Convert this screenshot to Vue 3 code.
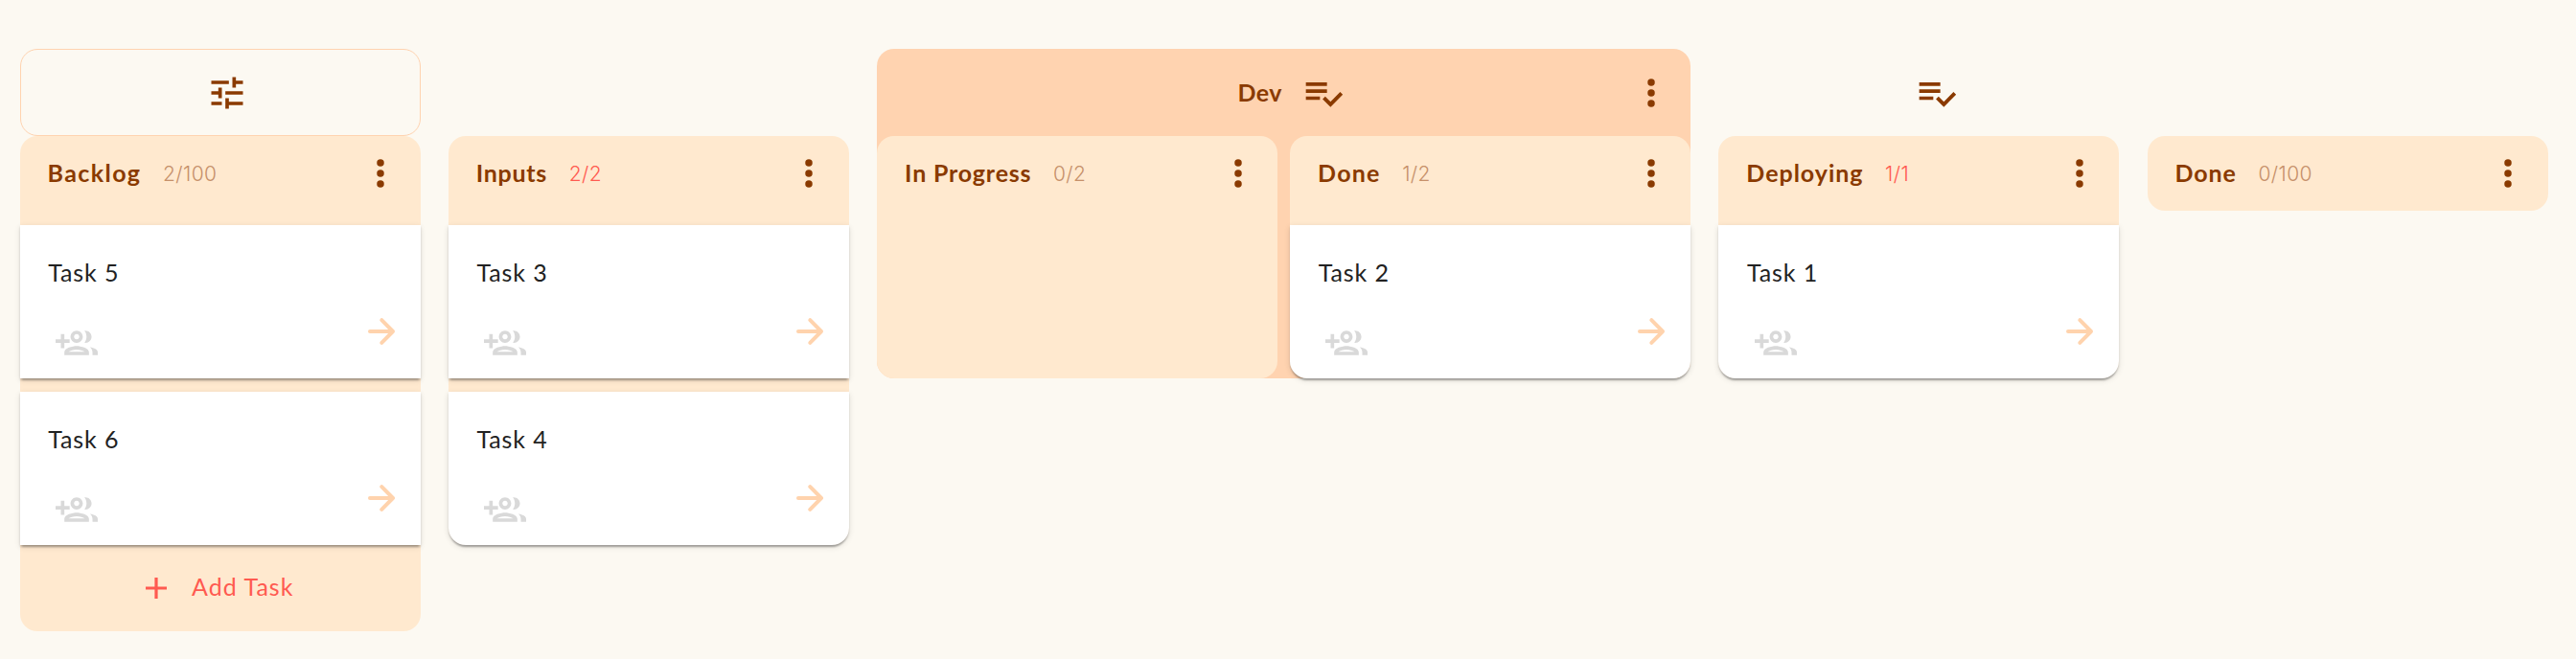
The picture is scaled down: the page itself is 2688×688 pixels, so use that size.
<script setup>
const groups = [
  {
    type: 'settings',
    columns: [{ name: 'Backlog', count: '2/100', track: 1.4, tasks: ['Task 5', 'Task 6'], add: true }],
  },
  {
    type: 'empty',
    columns: [{ name: 'Inputs', count: '2/2', track: 0.72, full: true, tasks: ['Task 3', 'Task 4'] }],
  },
  {
    type: 'stage',
    name: 'Dev',
    columns: [
      { name: 'In Progress', count: '0/2', track: 0.81, tasks: [] },
      { name: 'Done', count: '1/2', track: 1.2, tasks: ['Task 2'] },
    ],
  },
  {
    type: 'rules',
    columns: [{ name: 'Deploying', count: '1/1', track: 0.97, full: true, tasks: ['Task 1'] }],
  },
  {
    type: 'empty',
    columns: [{ name: 'Done', count: '0/100', track: 0.9, tasks: [] }],
  },
]
</script>

<template>
  <main class="board">
    <section v-for="(group, g) in groups" :key="g" class="group" :class="group.type">
      <header class="group-head">
        <svg v-if="group.type === 'settings'" class="icon tune" viewBox="0 0 24 24">
          <path d="M3 17v2h6v-2H3zM3 5v2h10V5H3zm10 16v-2h8v-2h-8v-2h-2v6h2zM7 9v2H3v2h4v2h2V9H7zm14 4v-2H11v2h10zm-6-4h2V7h4V5h-4V3h-2v6z" />
        </svg>
        <span v-if="group.name" class="group-name">{{ group.name }}</span>
        <svg v-if="group.type === 'stage' || group.type === 'rules'" class="icon check" viewBox="0 0 24 24">
          <path d="M14 10H2v2h12v-2zm0-4H2v2h12V6zM2 16h8v-2H2v2zm19.5-4.5L23 13l-6.99 7-4.51-4.5L13 14l3.01 3 5.49-5.5z" />
        </svg>
        <svg v-if="group.type === 'stage'" class="icon more" viewBox="0 0 24 24">
          <circle cx="12" cy="6" r="2.05" /><circle cx="12" cy="12" r="2.05" /><circle cx="12" cy="18" r="2.05" />
        </svg>
      </header>

      <div class="columns">
        <article v-for="col in group.columns" :key="col.name" class="column">
          <header class="column-head">
            <h2 class="title" :style="{ letterSpacing: col.track + 'px' }">{{ col.name }}</h2>
            <span class="count" :class="{ full: col.full }">{{ col.count }}</span>
            <svg class="icon more" viewBox="0 0 24 24">
              <circle cx="12" cy="6" r="2.05" /><circle cx="12" cy="12" r="2.05" /><circle cx="12" cy="18" r="2.05" />
            </svg>
          </header>

          <div v-if="col.tasks.length" class="cards">
            <div v-for="task in col.tasks" :key="task" class="card" :class="{ closed: !col.add }">
              <p class="task">{{ task }}</p>
              <div class="actions">
                <svg class="assign" viewBox="0 0 24 24">
                  <path d="M8 10H5V7H3v3H0v2h3v3h2v-3h3z" />
                  <path d="M12 13.75c-2.34 0-7 1.17-7 3.5V19h14v-1.75c0-2.33-4.66-3.5-7-3.5zM7.34 17c.84-.58 2.87-1.25 4.66-1.25s3.82.67 4.66 1.25H7.34zM12 12c1.93 0 3.5-1.57 3.5-3.5S13.93 5 12 5 8.5 6.57 8.5 8.5 10.07 12 12 12zm0-5c.83 0 1.5.67 1.5 1.5S12.83 10 12 10s-1.5-.67-1.5-1.5S11.17 7 12 7z" />
                  <path d="M16.4 5.08c.75.93 1.2 2.1 1.2 3.42s-.45 2.5-1.2 3.42c.25.05.4.08.6.08 1.93 0 3.5-1.57 3.5-3.5S18.93 5 17 5c-.2 0-.4.03-.6.08z" />
                  <path d="M19.54 14.4c.85.72 1.46 1.65 1.46 2.85V19h3v-1.75c0-1.5-1.95-2.45-4.46-2.85z" />
                </svg>
                <svg class="forward" viewBox="0 0 30 30">
                  <path d="M3 15h24M15.3 3.1 27 15 15.3 26.9" />
                </svg>
              </div>
            </div>
          </div>

          <button v-if="col.add" class="add" type="button">
            <svg class="plus" viewBox="0 0 22 22"><path d="M11 0v22M0 11h22" /></svg>
            <span class="add-label">Add Task</span>
          </button>
        </article>
      </div>
    </section>
  </main>
</template>

<style>
html,
body {
  background: #fcf9f2;
}
</style>

<style scoped>
.board {
  box-sizing: border-box;
  width: 2688px;
  height: 688px;
  padding: 51px 0 0 20.6px;
  display: flex;
  align-items: flex-start;
  gap: 29.25px;
  overflow: hidden;
  font-family: Lato, "Open Sans", sans-serif;
  color: #8a3a00;
  background: #fcf9f2;
}
.group {
  flex: none;
  border-radius: 18px;
}
.stage {
  background: #ffd3b0;
}
.group-head {
  box-sizing: border-box;
  height: 91px;
  display: flex;
  align-items: center;
  justify-content: center;
  position: relative;
}
.settings .group-head {
  border: 1px solid #ffd3b0;
  border-radius: 18px;
}
.icon {
  width: 44px;
  height: 44px;
  flex: none;
  fill: currentColor;
}
.tune {
  margin-left: 14px;
}
.rules .check {
  margin-left: 37px;
}
.stage .check {
  margin-left: 21px;
}
.group-name {
  margin: 0 0 1px 15px;
  font-size: 25px;
  line-height: 30px;
  font-weight: 700;
  letter-spacing: 0.4px;
}
.stage .group-head .more {
  position: absolute;
  right: 19px;
  top: 24px;
}
.columns {
  display: flex;
  gap: 13px;
}
.column {
  width: 418px;
  border-radius: 18px;
  background: #ffe9cf;
}
.column-head {
  box-sizing: border-box;
  height: 78px;
  padding: 0 19.5px 0 29px;
  display: flex;
  align-items: center;
}
.title {
  margin: 0 0 2px;
  font-size: 25px;
  line-height: 30px;
  font-weight: 700;
}
.count {
  margin: 1px 0 0 22.6px;
  font-family: Inter, "Open Sans", sans-serif;
  font-size: 21px;
  font-weight: 300;
  line-height: 26px;
  letter-spacing: 0.4px;
  color: #c6906a;
}
.count.full {
  color: #ff5a50;
}
.column-head .more {
  margin-left: auto;
}
.cards {
  margin-top: 15px;
  display: flex;
  flex-direction: column;
  gap: 14px;
}
.card {
  box-sizing: border-box;
  height: 160px;
  padding: 34px 26px 0 29.6px;
  background: #fff;
  box-shadow: 0 4px 2px -2px rgba(0, 0, 0, 0.2), 0 2px 2px 0 rgba(0, 0, 0, 0.14),
    0 2px 6px 0 rgba(0, 0, 0, 0.12);
}
.card.closed:last-child {
  border-radius: 0 0 18px 18px;
}
.task {
  margin: 0;
  font-size: 25px;
  line-height: 30px;
  letter-spacing: 0.9px;
  color: #222;
}
.actions {
  display: flex;
  justify-content: space-between;
  align-items: flex-start;
  margin-top: 32px;
}
.assign {
  width: 44px;
  height: 44px;
  margin: 5px 0 0 7.8px;
  fill: #d9d9d9;
}
.forward {
  width: 30px;
  height: 30px;
  fill: none;
  stroke: #ffd3ad;
  stroke-width: 4;
  stroke-linecap: round;
  stroke-linejoin: round;
}
.add {
  width: 100%;
  height: 90px;
  padding: 0 0 0 131.4px;
  border: 0;
  background: none;
  display: flex;
  align-items: center;
  font: 400 25px/30px Lato, "Open Sans", sans-serif;
  letter-spacing: 1.04px;
  color: #ff5a50;
}
.add-label {
  margin-bottom: 4px;
}
.plus {
  width: 22px;
  height: 22px;
  margin-right: 26px;
  fill: none;
  stroke: currentColor;
  stroke-width: 3.2;
}
</style>
